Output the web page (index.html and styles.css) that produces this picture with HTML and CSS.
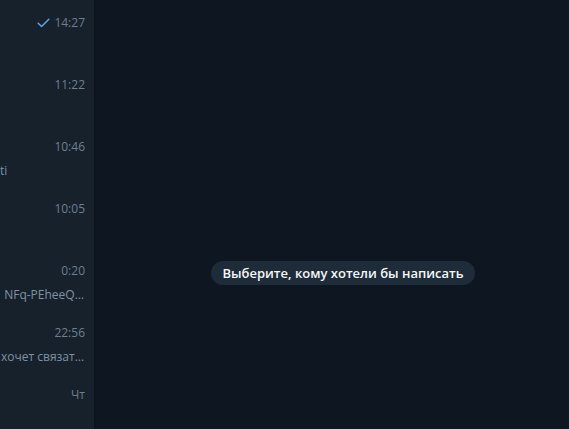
FILE: index.html
```html
<!DOCTYPE html>
<html lang="ru">
<head>
<meta charset="utf-8">
<link rel="stylesheet" href="styles.css">
</head>
<body>
<div class="app">
  <aside class="list">
    <div class="row">
      <div class="top"><svg class="check" width="13" height="10" viewBox="0 0 13 10"><path d="M1.2 5.2 L4.6 8.5 L11.8 1.3" fill="none" stroke="#5fa9e3" stroke-width="1.5" stroke-linecap="round" stroke-linejoin="round"/></svg><span class="time">14:27</span></div>
    </div>
    <div class="row"><div class="top"><span class="time">11:22</span></div></div>
    <div class="row"><div class="top"><span class="time">10:46</span></div><div class="msg">ti</div></div>
    <div class="row"><div class="top"><span class="time">10:05</span></div></div>
    <div class="row"><div class="top"><span class="time">0:20</span></div><div class="msg right">NFq-PEheeQ…</div></div>
    <div class="row"><div class="top"><span class="time">22:56</span></div><div class="msg right">хочет связат…</div></div>
    <div class="row"><div class="top"><span class="time">Чт</span></div></div>
  </aside>
  <main class="chat">
    <div class="pill">Выберите, кому хотели бы написать</div>
  </main>
</div>
</body>
</html>
```

FILE: styles.css
```css
html, body {
  margin: 0;
  padding: 0;
  height: 100%;
}
body {
  font-family: "Open Sans", "Noto Sans", sans-serif;
  background: #0e1621;
  overflow: hidden;
}
.app {
  display: flex;
  height: 429px;
}
.list {
  width: 95px;
  flex: none;
  background: #17212b;
  border-right: 1px solid #0b131b;
  display: flex;
  flex-direction: column;
  padding-top: 14px;
  box-sizing: border-box;
}
.row {
  height: 62px;
  flex: none;
  display: flex;
  flex-direction: column;
  padding-right: 9px;
}
.top {
  display: flex;
  justify-content: flex-end;
  align-items: center;
  height: 18px;
  gap: 4px;
}
.time {
  font-size: 12px;
  color: #6d7f8f;
  line-height: 18px;
}
.check {
  display: block;
}
.msg {
  font-size: 12px;
  color: #7f91a4;
  line-height: 18px;
  margin-top: 6px;
  white-space: nowrap;
}
.msg.right {
  text-align: right;
  margin-right: 1px;
}
.chat {
  flex: 1;
  display: flex;
  justify-content: center;
  align-items: center;
  padding-left: 22px;
  padding-top: 116px;
}
.pill {
  background: #1e2c3a;
  color: #f5f7f9;
  font-size: 13px;
  font-weight: 600;
  line-height: 24px;
  padding: 0 11px;
  border-radius: 12px;
}
```
